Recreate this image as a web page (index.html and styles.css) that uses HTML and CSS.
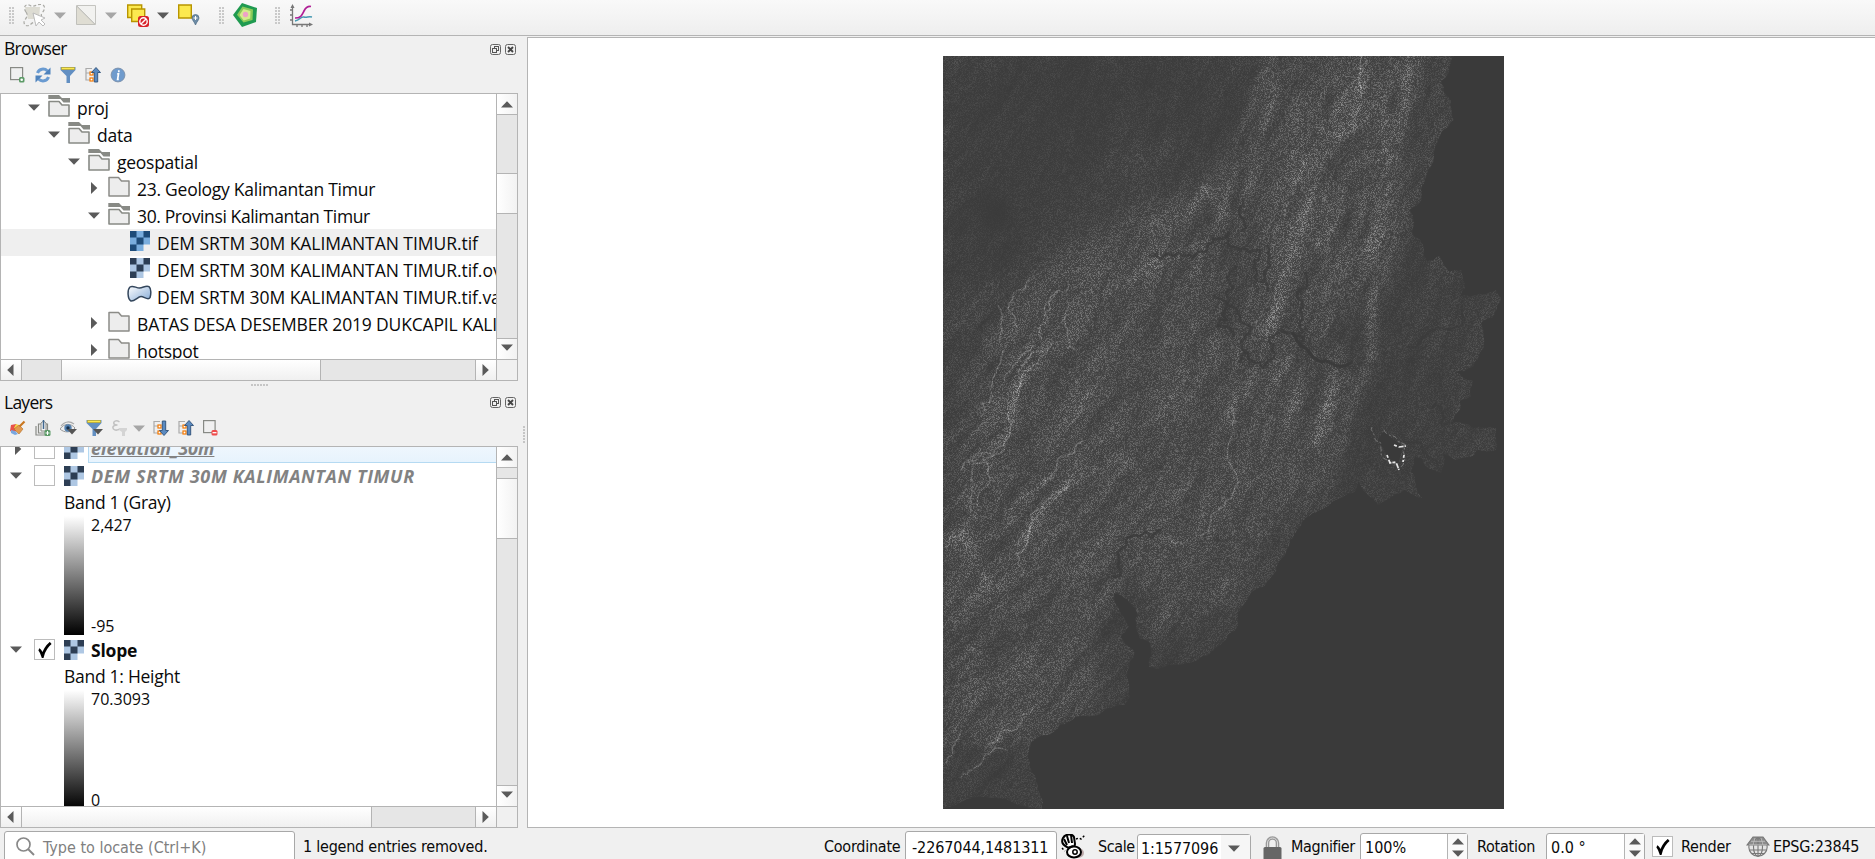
FILE: index.html
```
<!DOCTYPE html>
<html lang="en">
<head>
<meta charset="utf-8">
<title>Map</title>
<link rel="stylesheet" href="styles.css">
</head>
<body>
<svg class="defs" width="0" height="0">
  <defs>
    <linearGradient id="poly" x1="0" y1="0" x2="1" y2="1"><stop offset="0" stop-color="#fff"/><stop offset="1" stop-color="#86abd6"/></linearGradient>
    <symbol id="down" viewBox="0 0 12 7"><path d="M0 .5h12L6 6.8z" fill="currentColor"/></symbol>
    <symbol id="up" viewBox="0 0 12 7"><path d="M0 6.5h12L6 .2z" fill="currentColor"/></symbol>
    <symbol id="right" viewBox="0 0 7 12"><path d="M.5 0v12L6.8 6z" fill="currentColor"/></symbol>
    <symbol id="left" viewBox="0 0 7 12"><path d="M6.5 0v12L.2 6z" fill="currentColor"/></symbol>
    <symbol id="folder" viewBox="0 0 22 22"><path d="M1 1.500h9.500l3 3.500H21v15H1z" fill="#ededed" stroke="#8c8c88" stroke-width="1.500" stroke-linejoin="round"/></symbol>
    <symbol id="folder-open" viewBox="0 0 22 22"><path d="M.3 0H11l3 3h8v4.500h-6.500L12.500 4H.3z" fill="#888a85"/><path d="M1 6.500h10l3 3.500h7v11H1z" fill="#ededed" stroke="#888a85" stroke-width="1.600" stroke-linejoin="round"/></symbol>
    <symbol id="raster" viewBox="0 0 20 20"><path d="M0 0h20v13.500h-6.500V20H0z" fill="#aec7e3"/><path d="M0 0h6.500v6.500H0zM13.500 0H20v6.500h-6.500zM6.500 6.500h7v7h-7zM0 13.500h6.500V20H0z" fill="#2d3e54"/></symbol>
    <symbol id="raster-sel" viewBox="0 0 20 20"><path d="M0 0h20v13.500h-6.500V20H0z" fill="#79addd"/><path d="M0 0h6.500v6.500H0zM13.500 0H20v6.500h-6.500zM6.500 6.500h7v7h-7zM0 13.500h6.500V20H0z" fill="#1d4b78"/></symbol>
    <symbol id="polygon" viewBox="0 0 25 19"><path d="M3 2c3-2 6 1 9.500 1S19-.2 22 1.700c2.500 2 2 8 1 11-2 3-6-1.200-9-1.200s-6 4.700-10 4.500C.3 14 .3 4.500 3 2z" fill="url(#poly)" stroke="#33465c" stroke-width="1.500"/></symbol>
    <symbol id="float" viewBox="0 0 11 11"><rect x=".5" y=".5" width="10" height="10" rx="2" fill="none" stroke="#666"/><rect x="4.500" y="2.500" width="4" height="4" fill="none" stroke="#555"/><rect x="2.500" y="4.500" width="4" height="4" fill="#f0f0f0" stroke="#555"/></symbol>
    <symbol id="close" viewBox="0 0 11 11"><rect x=".5" y=".5" width="10" height="10" rx="2" fill="none" stroke="#666"/><path d="M3 3l5 5M8 3L3 8" stroke="#444" stroke-width="1.900"/></symbol>
    <symbol id="filter" viewBox="0 0 16 16"><path d="M.5 0h15v3L10 9v7H6.500V9L.5 3z" fill="#628fc2"/><path d="M1.500.5h13v2h-13z" fill="#fce94f" stroke="#c4a000" stroke-width=".5"/></symbol>
    <symbol id="tree-lines" viewBox="0 0 16 16"><path d="M1 1v12h4M1 6h4M1 1.500h6" fill="none" stroke="#aaa" stroke-width="1.200"/><rect x="5" y="5" width="3" height="3" fill="#fff" stroke="#f57900" stroke-width="1.200"/><rect x="5" y="11" width="3" height="3" fill="#fff" stroke="#f57900" stroke-width="1.200"/></symbol>
    <symbol id="collapse" viewBox="0 0 16 16"><use href="#tree-lines"/><path d="M11 .5l4.500 5H12.700V15H9.300V5.500H6.500z" fill="#5b8ac0" stroke="#2f5078" stroke-width=".9"/></symbol>
    <symbol id="expand" viewBox="0 0 16 16"><use href="#tree-lines"/><path d="M11 15.500l4.500-5H12.700V1H9.300v9.500H6.500z" fill="#5b8ac0" stroke="#2f5078" stroke-width=".9"/></symbol>
    <symbol id="check" viewBox="0 0 14 16"><path d="M.8 7.500C2.500 8 3.500 11 4.600 14 6 9 9 4 12.700 1" fill="none" stroke="#000" stroke-width="2.800"/></symbol>
  </defs>
</svg>

<header class="toolbar">
  <i class="grip"></i>
  <svg class="t-select" width="24" height="24"><path d="M2 3l3 12H16l1-12z" fill="#dddcd3"/><path d="M3 8C-1 2 4-1 8 2c4 1 7-3 12-1 3 2 1 6-1 8-2 3 1 4 0 6M3 8c3 4-1 7-2 10 0 4 4 5 7 2 2-2 4-2 6-1" fill="none" stroke="#a9a9a4" stroke-width="1.200" stroke-dasharray="3 2"/><path d="M10 9l3 13 3-4 4 4 2-2-4-4 4-2z" fill="#fff" stroke="#bbb"/></svg>
  <svg class="t-arrow dim" width="12" height="7"><use href="#down"/></svg>
  <svg class="t-split" width="20" height="20"><path d="M.5.5h19v19z" fill="#f2f2f0" stroke="#c4c4c0"/><path d="M.5 1v18.500H19z" fill="#dfddd3" stroke="#c0c0bb"/></svg>
  <svg class="t-arrow dim" width="12" height="7"><use href="#down"/></svg>
  <svg class="t-desel" width="23" height="23"><path d="M.7 1h14v12.500h-14z" fill="#fce94f" stroke="#b89500" stroke-width="1.400"/><path d="M4.700 5h13v12.500h-13z" fill="#fce94f" stroke="#b89500" stroke-width="1.400"/><rect x="11" y="12" width="11" height="11" rx="2.500" fill="#d8222a"/><circle cx="16.500" cy="17.500" r="3.700" fill="none" stroke="#fff" stroke-width="1.400"/><path d="M14 20l5-5" stroke="#fff" stroke-width="1.400"/></svg>
  <svg class="t-arrow" width="12" height="7"><use href="#down"/></svg>
  <svg class="t-loc" width="22" height="22"><path d="M.7 1h12.600v13H.7z" fill="#fce94f" stroke="#b89500" stroke-width="1.400"/><path d="M17.500 10.500a3.500 3.500 0 0 1 3.500 3.500c0 2-2.500 4-3.500 7-1-3-3.500-5-3.500-7a3.500 3.500 0 0 1 3.500-3.500z" fill="#6d8ca6" stroke="#4c6a84" stroke-width=".7"/><path d="M17.500 12v4M15.500 14h4" stroke="#fff"/></svg>
  <i class="grip g2"></i>
  <svg class="t-penta" width="24" height="24"><path d="M9 0l15 5-1 14-14 5-9-12z" fill="#1f9a50"/><path d="M9.500 3.500L20 6.500l-.5 10.500L10.500 19.500 4 11.800z" fill="#8ccb5a"/><path d="M10.500 6l7 2-.3 7.500-6.500 2L6.500 12z" fill="#d5ec8d"/><circle cx="12.500" cy="11.500" r="2.700" fill="#eda2c6"/></svg>
  <i class="grip g3"></i>
  <svg class="t-chart" width="23" height="23"><path d="M2.500 2v18.500H20M0 6h2M0 11h2M0 16h2M7 21v2M12 21v2M17 21v2" fill="none" stroke="#777" stroke-width="1.300"/><path d="M.5 4l2-4 2 4zM19 18.500l4 2-4 2z" fill="#777"/><path d="M5 17c5-1 6-5 9-4s4-1 8 0" fill="none" stroke="#4699b2" stroke-width="1.500"/><path d="M5 14c6 0 7-3 9-7s4-5 7-4.500" fill="none" stroke="#b01e96" stroke-width="1.700"/></svg>
</header>

<main class="work">
  <aside class="docks">
    <section class="dock browser">
      <div class="title"><span>Browser</span><svg width="11" height="11"><use href="#float"/></svg><svg width="11" height="11"><use href="#close"/></svg></div>
      <div class="tools">
        <svg width="16" height="16"><rect x=".6" y=".6" width="12" height="12" fill="none" stroke="#888a85" stroke-width="1.200"/><rect x="9" y="10" width="5.500" height="5.500" rx="1.500" fill="#5b9a66"/><circle cx="11.700" cy="12.700" r="1.300" fill="#fff"/></svg>
        <svg width="16" height="16"><path d="M2.500 6C4 1.500 9.500 1 12.500 4M13.500 10C12 14.500 6.500 15 3.500 12" fill="none" stroke="#6a9bd1" stroke-width="3"/><path d="M15.500.5v7H8.500zM.5 15.500v-7h7z" fill="#4f83bd"/></svg>
        <svg width="16" height="16"><use href="#filter"/></svg>
        <svg width="16" height="16"><use href="#collapse"/></svg>
        <svg width="16" height="16"><circle cx="8" cy="8" r="6.900" fill="#6f9bcd" stroke="#7e93ad"/><path d="M8.800 3.200v2M7.200 6.800h1.300l-.9 5.500h1.200" fill="none" stroke="#fff" stroke-width="1.700"/></svg>
      </div>
      <div class="frame">
        <div class="view tree">
          <div class="row l0"><svg class="ex" width="12" height="7"><use href="#down"/></svg><svg class="ic" width="22" height="22"><use href="#folder-open"/></svg>proj</div>
          <div class="row l1"><svg class="ex" width="12" height="7"><use href="#down"/></svg><svg class="ic" width="22" height="22"><use href="#folder-open"/></svg>data</div>
          <div class="row l2"><svg class="ex" width="12" height="7"><use href="#down"/></svg><svg class="ic" width="22" height="22"><use href="#folder-open"/></svg>geospatial</div>
          <div class="row l3"><svg class="ex" width="12" height="12"><use href="#right"/></svg><svg class="ic" width="22" height="22"><use href="#folder"/></svg>23. Geology Kalimantan Timur</div>
          <div class="row l3 tight"><svg class="ex" width="12" height="7"><use href="#down"/></svg><svg class="ic" width="22" height="22"><use href="#folder-open"/></svg>30. Provinsi Kalimantan Timur</div>
          <div class="row l4 caps hover"><svg class="ic" width="20" height="20"><use href="#raster-sel"/></svg>DEM SRTM 30M KALIMANTAN TIMUR.tif</div>
          <div class="row l4 caps"><svg class="ic" width="20" height="20"><use href="#raster"/></svg>DEM SRTM 30M KALIMANTAN TIMUR.tif.ovr</div>
          <div class="row l4 caps vec"><svg class="ic" width="25" height="19"><use href="#polygon"/></svg>DEM SRTM 30M KALIMANTAN TIMUR.tif.vat</div>
          <div class="row l3 caps2"><svg class="ex" width="12" height="12"><use href="#right"/></svg><svg class="ic" width="22" height="22"><use href="#folder"/></svg>BATAS DESA DESEMBER 2019 DUKCAPIL KALIMANTAN</div>
          <div class="row l3"><svg class="ex" width="12" height="12"><use href="#right"/></svg><svg class="ic" width="22" height="22"><use href="#folder"/></svg>hotspot</div>
        </div>
        <div class="vbar"><b><svg width="12" height="7"><use href="#up"/></svg></b><i class="v1"></i><b class="thumb v2"></b><i class="rest"></i><b><svg width="12" height="7"><use href="#down"/></svg></b></div>
        <div class="hbar"><b><svg width="7" height="12"><use href="#left"/></svg></b><i class="h1"></i><b class="thumb h2"></b><i class="rest"></i><b><svg width="7" height="12"><use href="#right"/></svg></b></div>
        <div class="corner"></div>
      </div>
    </section>
    <div class="hsplit"><i></i></div>
    <section class="dock layers">
      <div class="title"><span>Layers</span><svg width="11" height="11"><use href="#float"/></svg><svg width="11" height="11"><use href="#close"/></svg></div>
      <div class="tools">
        <svg width="16" height="16"><path d="M1 5l5-1 3 4-5 5-4-2z" fill="#e8524a"/><path d="M6 4l3 1-2 4-3-1z" fill="#f7d74a"/><path d="M1 10l4 1 3 3-3 1-4-2z" fill="#79a7e0"/><path d="M4 9l5-4 4 4-4 5z" fill="#e29a4e" stroke="#b06f2a" stroke-width=".6"/><path d="M9.500 6.500L14.500 1.500" stroke="#c9771f" stroke-width="2.200"/></svg>
        <svg width="16" height="16"><path d="M1 6v9h9M3.500 4v9h9V4z" fill="none" stroke="#888a85" stroke-width="1.200"/><path d="M6 3v8h5V3L8.500 1z" fill="#f4f4f4" stroke="#888a85"/><path d="M8.500 0v9" stroke="#3f668f" stroke-width="1.500"/><rect x="9.500" y="10" width="6" height="6" rx="1.500" fill="#5b9a66"/><path d="M12.500 11v4M10.500 13h4" stroke="#fff"/></svg>
        <svg width="17" height="16"><path d="M0 9C4 3 11 3 15 8 11 13 4 13 0 9z" fill="#eee" stroke="#999"/><path d="M1 6C5 1 10 1 14 4" fill="none" stroke="#aaa" stroke-width="1.200"/><circle cx="8" cy="8" r="3.700" fill="#5480ae"/><circle cx="8" cy="8" r="1.700" fill="#17304c"/><path d="M7 9h10l-5 5.500z" fill="#555"/></svg>
        <svg width="17" height="16"><use href="#filter" width="16" height="16"/><path d="M7 9h10l-5 5.500z" fill="#555"/></svg>
        <svg width="16" height="16"><path d="M7.500 2C4-.5 1 1.500 2 4c.6 1 2 1 3.500 1C3 5-.5 6 1.500 9c2 2 5 1 6.500-.5" fill="none" stroke="#c2c2c2" stroke-width="1.500"/><path d="M7 8h8v2l-2 2v4h-3v-4L7 10z" fill="#d4d4d4"/></svg>
        <svg class="dim tiny" width="12" height="7"><use href="#down"/></svg>
        <svg width="16" height="16"><use href="#expand"/></svg>
        <svg width="16" height="16"><use href="#collapse"/></svg>
        <svg width="16" height="16"><rect x=".6" y=".6" width="11.500" height="12" fill="none" stroke="#888a85" stroke-width="1.200"/><rect x="8.500" y="10" width="6" height="5.500" rx="1.500" fill="#ef4b4b"/><path d="M9.500 12.700h4" stroke="#fff" stroke-width="1.300"/></svg>
      </div>
      <div class="frame">
        <div class="view legend">
          <div class="lrow first"><svg class="ex" width="12" height="12"><use href="#right"/></svg><i class="box"></i><svg class="ic" width="20" height="20"><use href="#raster"/></svg><span class="cur">elevation_30m</span></div>
          <div class="lrow"><svg class="ex" width="12" height="7"><use href="#down"/></svg><i class="box"></i><svg class="ic" width="20" height="20"><use href="#raster"/></svg><span class="off">DEM SRTM 30M KALIMANTAN TIMUR</span></div>
          <div class="band">Band 1 (Gray)</div>
          <div class="ramp"><i></i><div><span>2,427</span><span>-95</span></div></div>
          <div class="lrow"><svg class="ex" width="12" height="7"><use href="#down"/></svg><i class="box"><svg width="14" height="16"><use href="#check"/></svg></i><svg class="ic" width="20" height="20"><use href="#raster"/></svg><span class="on">Slope</span></div>
          <div class="band">Band 1: Height</div>
          <div class="ramp"><i></i><div><span>70.3093</span><span>0</span></div></div>
        </div>
        <div class="vbar"><b><svg width="12" height="7"><use href="#up"/></svg></b><i class="v3"></i><b class="thumb v4"></b><i class="rest"></i><b><svg width="12" height="7"><use href="#down"/></svg></b></div>
        <div class="hbar"><b><svg width="7" height="12"><use href="#left"/></svg></b><b class="thumb h4"></b><i class="rest"></i><b><svg width="7" height="12"><use href="#right"/></svg></b></div>
        <div class="corner"></div>
      </div>
    </section>
  </aside>
  <div class="vsplit"><i></i></div>
  <section class="mapview"><canvas id="map" width="561" height="753"></canvas></section>
</main>

<footer class="status">
  <div class="field search"><svg width="19" height="19"><circle cx="7.500" cy="7.500" r="6.500" fill="none" stroke="#888" stroke-width="1.700"/><path d="M12 12l6 6" stroke="#888" stroke-width="2"/></svg><span>Type to locate (Ctrl+K)</span></div>
  <span class="msg">1 legend entries removed.</span>
  <span class="lab coord">Coordinate</span>
  <div class="field xy">-2267044,1481311</div>
  <svg class="s-mouse" width="24" height="25"><ellipse cx="17" cy="19" rx="6" ry="5" fill="#bca9a9"/><path d="M2 4C4 0 11-1 13 3l1 7c0 3-5 5-8 3C2 11 0 8 2 4z" fill="#fff" stroke="#000" stroke-width="2"/><path d="M6 2l2 7M10 1l1 8M3 5l3 6" stroke="#000" stroke-width="2"/><ellipse cx="13" cy="18" rx="7" ry="5.500" fill="#fff" stroke="#000" stroke-width="2"/><circle cx="14" cy="18" r="2.200" fill="none" stroke="#000" stroke-width="1.500"/><path d="M7 14l5-2" stroke="#000" stroke-width="2"/><path d="M15 5l3-1 2 1 4-4M1 14l3 3" stroke="#000" stroke-width="1.500" stroke-dasharray="2 2" fill="none"/></svg>
  <span class="lab scale">Scale</span>
  <div class="field combo"><span>1:1577096</span><b><svg width="12" height="7"><use href="#down"/></svg></b></div>
  <svg class="s-lock" width="19" height="24"><path d="M4.500 12V7a5 5 0 0 1 10 0v5" fill="none" stroke="#999" stroke-width="3.600"/><path d="M4.500 12V7a5 5 0 0 1 10 0v5" fill="none" stroke="#ddd" stroke-width="1"/><rect x=".5" y="11" width="18" height="13" rx="1.500" fill="#666"/></svg>
  <span class="lab mag">Magnifier</span>
  <div class="field spin m"><span>100%</span><b><svg width="12" height="7"><use href="#up"/></svg><svg width="12" height="7"><use href="#down"/></svg></b></div>
  <span class="lab rot">Rotation</span>
  <div class="field spin r"><span>0.0 °</span><b><svg width="12" height="7"><use href="#up"/></svg><svg width="12" height="7"><use href="#down"/></svg></b></div>
  <i class="box"><svg width="14" height="16"><use href="#check"/></svg></i>
  <span class="lab ren">Render</span>
  <svg class="s-globe" width="24" height="21"><g fill="none" stroke="#777" stroke-width="1.100"><circle cx="12" cy="11" r="9.200" fill="#e4e4e4"/><path d="M7 1h10l6 8H1z" fill="#8c8c8c"/><ellipse cx="12" cy="11" rx="4.500" ry="9.200"/><path d="M12 1.500v19M3.500 14h17M5.500 17.500h13"/></g><path d="M3 8.800h18M5 5.300h14M9 2L7 9M15 2l2 7" stroke="#c4c4c4" stroke-width=".8"/></svg>
  <span class="lab">EPSG:23845</span>
</footer>
<script src="map.js"></script>
</body>
</html>
```
FILE: styles.css
```
* { box-sizing: border-box; }
body { margin: 0; height: 859px; overflow: hidden; display: flex; flex-direction: column; background: #f0f0f0; font: 17.5px "Open Sans", "Noto Sans", sans-serif; color: #0a0a0a; }
svg { display: block; flex: none; color: #5a5a5a; }
i { font-style: normal; display: block; }
b { font-weight: 400; }
.defs { position: absolute; }
.dim { color: #a6a6a6; }

.toolbar { height: 36px; flex: none; display: flex; align-items: flex-start; padding: 0 0 0 9px; background: linear-gradient(#f9f9f9, #eeeeee); border-bottom: 1px solid #b4b4b4; }
.grip { width: 5px; height: 17px; margin-top: 7px; background: radial-gradient(circle at 1px 1px, #c9c9c9 0.8px, transparent 1px) 0 0 / 3px 3px; }
.g2 { margin-left: 19px; }
.g3 { margin-left: 18px; }
.t-select { margin: 4px 0 0 9px; }
.t-arrow { margin: 12px 0 0 7px; }
.t-split { margin: 5px 0 0 10px; }
.t-split + .t-arrow { margin-left: 9px; }
.t-desel { margin: 4px 0 0 10px; }
.t-loc { margin: 4px 0 0 9px; }
.t-penta { margin: 3px 0 0 9px; }
.t-chart { margin: 4px 0 0 10px; }

.work { display: flex; height: 792px; flex: none; }
.docks { width: 518px; display: flex; flex-direction: column; }
.title { height: 27px; display: flex; align-items: center; padding: 0 2px 3px 4px; gap: 4px; letter-spacing: -0.75px; }
.title svg { margin-top: 2px; }
.title span { flex: 1; }
.tools { height: 25px; display: flex; align-items: center; padding-left: 10px; gap: 9px; }
.tiny { margin: 0 -1px 0 -4px; }
.browser .tools { height: 30px; padding-bottom: 7px; }
.layers .tools { height: 29px; padding-bottom: 7px; }
.frame { display: grid; grid-template-columns: 495px 21px; border: 1px solid #b4b4b4; }
.browser .frame { grid-template-rows: 265px 21px; }
.layers .frame { grid-template-rows: 359px 21px; }
.view { background: #fff; overflow: hidden; }

.row { display: flex; align-items: center; height: 27px; white-space: nowrap; letter-spacing: -0.26px; padding-top: 1px; }
.row .ex { width: 12px; margin-right: 8px; position: relative; top: -1px; }
.row .ic { margin-right: 7px; position: relative; top: -2px; }
.l0 { padding-left: 27px; }
.l1 { padding-left: 47px; }
.l2 { padding-left: 67px; }
.l3 { padding-left: 87px; }
.l4 { padding-left: 129px; }
.row.vec { padding-left: 126px; }
.row.vec .ic { margin-right: 5px; top: -3px; }
.caps { letter-spacing: -0.05px; }
.caps2 { letter-spacing: -0.17px; }
.tight { letter-spacing: -0.38px; }
.hover { background: #efefef; }

.vbar, .hbar { display: flex; background: #e6e6e6; }
.vbar { flex-direction: column; border-left: 1px solid #b4b4b4; }
.hbar { border-top: 1px solid #b4b4b4; }
.rest { flex: 1; }
.vbar b, .hbar b { flex: none; display: flex; align-items: center; justify-content: center; background: linear-gradient(90deg, #fff, #f2f2f2); }
.hbar b { background: linear-gradient(#fff, #f0f0f0); width: 21px; }
.vbar b { height: 21px; }
.vbar b:first-child { border-bottom: 1px solid #b4b4b4; }
.vbar b:last-child { border-top: 1px solid #b4b4b4; padding-bottom: 3px; }
.hbar b:first-child { border-right: 1px solid #b4b4b4; padding-right: 1px; }
.hbar b:last-child { border-left: 1px solid #b4b4b4; padding-right: 2px; }
.vbar .thumb { border: solid #b4b4b4; border-width: 1px 0; }
.hbar .thumb { border: solid #b4b4b4; border-width: 0 1px; }
.corner { border: solid #b4b4b4; border-width: 1px 0 0 1px; }
.v1 { height: 58px; }
.vbar .v2 { height: 41px; }
.v3 { height: 10px; }
.vbar .v4 { height: 61px; }
.h1 { width: 39px; }
.hbar .h2 { width: 260px; }
.hbar .h4 { width: 350px; border-left: 0; }

.hsplit { height: 8px; display: flex; justify-content: center; align-items: center; }
.hsplit i { width: 17px; height: 2px; background: radial-gradient(circle at 1px 1px, #c4c4c4 0.7px, transparent 1px) 0 0 / 3px 3px; }
.layers .title { height: 28px; }
.vsplit { width: 9px; }
.vsplit i { width: 2px; height: 17px; margin: 390px 0 0 5px; background: radial-gradient(circle at 1px 1px, #c4c4c4 0.7px, transparent 1px) 0 0 / 3px 3px; }

.lrow { display: flex; align-items: center; height: 27px; padding-left: 9px; white-space: nowrap; }
.first { margin-top: -12px; }
.lrow .ex { margin-right: 12px; }
.first .ex { margin: 0 10px 0 2px; }
.box { width: 21px; height: 21px; flex: none; border: 1px solid #bcbcbc; background: #fff; display: flex; align-items: center; justify-content: center; }
.lrow .ic { margin: 0 4px 0 9px; }
.cur, .off, .on { padding-left: 3px; font-weight: 700; line-height: 26px; }
.cur, .off { color: #828282; font-style: italic; font-size: 18px; letter-spacing: 0.64px; }
.cur { flex: 1; letter-spacing: 0.05px; text-decoration: underline; background: linear-gradient(#f4f9fe, #e7f3fd); border: 1px solid #b5daf2; border-right: 0; padding-left: 2px; margin-bottom: 1px; line-height: 27px; }
.on { letter-spacing: -0.2px; }
.band { height: 27px; line-height: 26px; padding-left: 63px; letter-spacing: -0.28px; }
.ramp { height: 119px; margin-bottom: 1px; padding-left: 63px; display: flex; gap: 7px; font-size: 16px; line-height: 18px; }
.ramp i { width: 20px; background: linear-gradient(#fff, #000); }
.ramp div { display: flex; flex-direction: column; justify-content: space-between; }

.mapview { flex: 1; margin-top: 1px; background: #fff; border: 1px solid #b4b4b4; border-right: 0; padding: 18px 0 0 415px; }
.mapview canvas { display: block; background: #3a3a3a; }

.status { flex: 1; display: flex; align-items: flex-start; padding: 3px 0 0 4px; font: 16px/31px "DejaVu Sans Condensed", "DejaVu Sans", sans-serif; white-space: nowrap; overflow: hidden; }
.field { flex: none; background: #fff; border: 1px solid #a8a8a8; border-radius: 3px; height: 33px; display: flex; align-items: center; }
.search { width: 291px; padding-left: 11px; color: #808080; gap: 8px; }
.search svg { position: relative; top: -1px; }
.msg { width: 521px; margin-left: 8px; letter-spacing: -0.23px; }
.lab { letter-spacing: -0.25px; flex: none; }
.coord { width: 81px; }
.xy { width: 152px; padding-left: 6px; letter-spacing: -0.1px; }
.s-mouse { margin: 3px 0 0 4px; }
.scale { margin-left: 13px; width: 39px; letter-spacing: -0.4px; }
.combo { width: 114px; margin-top: 3px; padding-left: 3px; height: 28px; letter-spacing: -0.1px; }
.combo b { flex: 1; align-self: stretch; margin-left: 3px; background: #f6f6f6; display: flex; align-items: center; justify-content: center; padding-right: 3px; }
.s-lock { margin: 5px 0 0 12px; }
.mag { margin-left: 9px; width: 69px; letter-spacing: -0.4px; }
.spin { margin-top: 2px; height: 29px; padding-left: 4px; }
.spin span { flex: 1; }
.spin b { width: 20px; align-self: stretch; border-left: 1px solid #b4b4b4; background: #fafafa; display: flex; flex-direction: column; justify-content: center; align-items: center; gap: 5px; }
.m { width: 108px; }
.rot { margin-left: 9px; width: 69px; }
.r { width: 99px; }
.status .box { margin: 5px 0 0 7px; }
.ren { margin-left: 8px; width: 65px; }
.s-globe { margin: 5px 3px 0 0; }
```
FILE: map.js
```
// Slope raster: a relief mask (land, ridges, rivers) modulated by oriented speckle.
const W = 561, H = 753;
const canvas = document.getElementById('map');
const ctx = canvas.getContext('2d');

let seed = 7;
const rnd = () => ((seed = (seed * 1664525 + 1013904223) >>> 0) / 4294967296);

// Fractal midpoint displacement gives coastlines and rivers a natural outline.
function rough(pts, amount, closed) {
  let out = closed ? [...pts, pts[0]] : pts;
  for (let pass = 0; pass < 3; pass++) {
    const next = [out[0]];
    for (let i = 1; i < out.length; i++) {
      const a = out[i - 1], b = out[i];
      const len = Math.hypot(b[0] - a[0], b[1] - a[1]);
      if (len > 4 && !(a[0] === 0 && b[0] === 0) && !(a[1] === 0 && b[1] === 0)) {
        const d = (rnd() - 0.5) * len * amount;
        next.push([(a[0] + b[0]) / 2 - (b[1] - a[1]) / len * d, (a[1] + b[1]) / 2 + (b[0] - a[0]) / len * d]);
      }
      next.push(b);
    }
    out = next;
  }
  return out;
}

const land = rough([[0,0],[511,0],[498,27],[508,45],[511,64],[492,91],[484,117],[478,145],[467,154],[470,178],[481,191],[484,205],[496,200],[505,215],[519,214],[522,232],[517,240],[535,238],[553,234],[558,244],[549,262],[538,267],[541,291],[530,311],[512,316],[530,325],[528,340],[517,345],[517,354],[509,367],[530,372],[553,372],[553,394],[535,394],[527,401],[512,404],[500,398],[498,417],[485,412],[472,400],[468,415],[479,442],[461,434],[450,440],[435,449],[423,437],[415,425],[410,437],[400,441],[385,450],[370,457],[358,470],[347,484],[335,508],[320,531],[297,554],[293,574],[275,590],[255,604],[232,609],[206,611],[208,600],[207,587],[197,583],[194,557],[184,543],[171,537],[178,557],[186,571],[178,581],[192,597],[185,614],[187,641],[182,649],[150,660],[117,669],[88,687],[87,711],[95,730],[99,753],[0,753]], 0.25, true);

function layer(draw) {
  const c = document.createElement('canvas');
  c.width = W; c.height = H;
  const g = c.getContext('2d', { willReadFrequently: true });
  g.lineCap = g.lineJoin = 'round';
  draw(g);
  return g.getImageData(0, 0, W, H).data;
}
function trace(g, pts) {
  g.beginPath();
  pts.forEach((p, i) => (i ? g.lineTo(p[0], p[1]) : g.moveTo(p[0], p[1])));
}
function area(g, pts, v, blur) {
  g.filter = `blur(${blur}px)`;
  g.fillStyle = `rgb(${v},${v},${v})`;
  trace(g, pts); g.closePath(); g.fill();
}
function line(g, pts, color, w, blur) {
  g.filter = blur ? `blur(${blur}px)` : 'none';
  g.strokeStyle = color; g.lineWidth = w;
  trace(g, pts); g.stroke();
}

const ridges = [
  [[419,0],[417,41],[404,77]], [[450,11],[438,44],[425,60],[404,77],[390,80]], [[442,50],[442,85]],
  [[400,40],[389,64]], [[370,70],[395,78],[410,70]], [[335,20],[320,70]], [[470,0],[455,80]],
  [[412,92],[402,118],[392,157],[377,190]], [[370,137],[354,177],[340,220],[333,260]],
  [[264,135],[250,150],[232,170]], [[264,135],[284,164]], [[255,190],[200,214],[171,237]],
  [[171,274],[148,307]], [[438,174],[420,215],[400,244],[377,284]], [[430,225],[428,300]],
  [[404,320],[385,345],[370,385]], [[350,300],[330,325]], [[316,317],[289,351],[291,374]],
  [[245,320],[215,365]], [[109,287],[86,301],[74,335],[67,376],[44,397],[18,414],[29,454]],
  [[129,424],[100,450],[79,490]], [[160,400],[190,410]], [[21,474],[2,491]], [[150,330],[120,380]],
  [[355,320],[345,370]], [[20,480],[45,530]], [[110,420],[60,455]], [[180,395],[130,425]],
  [[335,245],[322,285]], [[410,110],[440,95],[455,105]], [[365,100],[350,130]]
];
const crests = [
  [[109,287],[88,298],[76,322],[72,345]], [[105,293],[80,315],[70,340],[67,376]], [[67,376],[55,392],[35,402],[18,414]],
  [[64,380],[50,400],[30,408]], [[30,412],[29,435],[34,464]], [[129,424],[104,444],[84,480],[81,517]], [[2,491],[8,480],[21,474]],
  [[289,351],[291,374],[291,434],[275,455],[258,480]], [[86,222],[70,240],[66,257],[69,284]],
  [[125,225],[108,240],[100,266]], [[125,245],[122,270],[125,292],[134,294]], [[55,250],[58,290]],
  [[44,691],[71,674],[78,660],[90,652]], [[3,707],[10,690],[18,674]], [[18,721],[40,705],[64,694]],
  [[60,295],[50,340],[38,360]], [[225,480],[240,488]], [[419,0],[417,41]], [[115,235],[105,262],[98,285]],
  [[92,290],[78,300],[62,325]], [[40,400],[44,430],[34,450]], [[100,430],[118,400],[140,385]]
];
const rivers = [
  [[207,199],[230,200],[255,196],[270,182],[286,177],[297,194],[316,194],[314,216],[312,231]],
  [[293,211],[284,222],[284,240],[297,261],[302,280],[305,297],[296,306]],
  [[305,297],[320,312],[326,281],[347,277],[358,290]],
  [[362,217],[360,250],[354,284]], [[465,291],[490,275],[519,251]],
  [[484,350],[500,370],[509,367]], [[458,377],[480,396],[500,414]], [[171,521],[182,491],[200,478],[217,474]],
  [[300,145],[299,175]], [[325,190],[322,215],[325,235]], [[270,240],[275,270],[290,280]]
];
const trunk = [[350,277],[358,290],[370,301],[390,308],[408,307]];
const faint = [
  [[408,307],[435,307],[465,301]], [[408,307],[417,320],[421,350],[431,374]],
  [[355,303],[342,350],[330,372]], [[375,320],[360,355],[352,374]], [[270,310],[240,340],[220,370]],
  [[345,393],[390,403],[400,430]], [[430,181],[455,180]], [[390,115],[440,124],[455,120]],
  [[260,480],[290,482],[320,485],[347,484]], [[240,550],[265,575]], [[270,350],[230,395],[200,440]],
  [[180,390],[140,415],[110,450]], [[285,440],[295,470],[300,500]], [[160,250],[158,230],[172,215]]
];

const mask = layer(g => {
  g.fillStyle = '#000'; g.fillRect(0, 0, W, H);
  area(g, land, 55, 0.6);
  // interior uplands
  area(g, [[310,0],[490,0],[480,110],[455,170],[440,300],[400,400],[385,430],[345,470],[300,540],[215,595],[185,500],[150,600],[170,640],[60,690],[0,720],[0,400],[50,270],[105,195],[180,170],[260,130],[300,110]], 112, 12);
  area(g, [[0,0],[280,0],[300,60],[240,120],[120,150],[100,190],[0,230]], 32, 16);
  area(g, [[160,105],[190,90],[225,80],[250,82],[235,104],[190,125]], 62, 7);
  area(g, [[0,695],[80,690],[92,753],[0,753]], 42, 5);
  area(g, [[470,0],[500,0],[500,140],[455,160]], 68, 8);
  area(g, [[375,280],[480,200],[555,240],[555,380],[450,450],[400,440],[410,370],[430,310]], 44, 9);
  area(g, [[35,140],[65,140],[70,170],[40,175]], 8, 6);
  // marshy lowlands around the lakes
  area(g, [[285,180],[325,185],[330,240],[295,300],[275,260]], 88, 9);
  ridges.forEach(r => line(g, r, 'rgba(215,215,215,.6)', 8, 3));
  rivers.forEach(r => line(g, rough(r, 0.7), 'rgba(10,10,10,.85)', 2.6, 0.7));
  line(g, rough(trunk, 0.3), 'rgba(0,0,0,.95)', 3.2, 0.6);
  faint.forEach(r => line(g, rough(r, 0.6), 'rgba(30,30,30,.5)', 2.4, 1));
});
const coast = layer(g => { g.fillStyle = '#fff'; trace(g, land); g.closePath(); g.fill(); });
const bright = layer(g => {
  g.fillStyle = '#000'; g.fillRect(0, 0, W, H);
  crests.forEach(r => line(g, rough(r, 0.5), 'rgba(210,210,210,.6)', 1.5, 0.5));
});

// Value noise sampled in a frame aligned with the fold belt.
const grid = Array.from({ length: 65536 }, rnd);
function vnoise(x, y) {
  const xi = Math.floor(x), yi = Math.floor(y);
  let fx = x - xi, fy = y - yi;
  fx = fx * fx * (3 - 2 * fx); fy = fy * fy * (3 - 2 * fy);
  const at = (a, b) => grid[((b & 255) << 8) | (a & 255)];
  return (at(xi, yi) * (1 - fx) + at(xi + 1, yi) * fx) * (1 - fy) +
         (at(xi, yi + 1) * (1 - fx) + at(xi + 1, yi + 1) * fx) * fy;
}

const img = ctx.createImageData(W, H);
for (let y = 0; y < H; y++) {
  for (let x = 0; x < W; x++) {
    const k = (y * W + x) * 4;
    const inside = coast[k + 3] / 255;
    // The belt swings from NNE in the north-east to NE in the south-west.
    const blend = Math.min(1, Math.max(0, (x - y * 0.5 + 60) / 220));
    const wx = x + 10 * vnoise(x / 40 + 9, y / 40 + 60), wy = y + 10 * vnoise(x / 40 + 33, y / 40 + 5);
    const along = (a, su, sv, o) => {
      const ca = Math.cos(a), sa = Math.sin(a);
      return vnoise((wx * ca - wy * sa) / su + o, (wx * sa + wy * ca) / sv + o + 60);
    };
    const mix = (su, sv, o) => along(1.17, su, sv, o) * blend + along(0.88, su, sv, o) * (1 - blend);
    const broad = mix(60, 11, 90);
    const mid = mix(26, 5, 30);
    const fine = mix(7, 2, 20);
    const m = mask[k] / 255 * (0.1 + 0.75 * broad + 0.65 * mid + 0.5 * fine);
    const r = rnd();
    let c = 58 + inside * m * (14 + 88 * r * r);
    c += inside * bright[k] / 255 * (10 + 95 * rnd());
    img.data[k] = img.data[k + 1] = img.data[k + 2] = c;
    img.data[k + 3] = 255;
  }
}
ctx.putImageData(img, 0, 0);

// Steep artefact near the delta
ctx.fillStyle = '#3a3a3a';
trace(ctx, [[440,376],[460,390],[455,408],[446,402],[435,384]]); ctx.fill();
ctx.strokeStyle = 'rgba(150,150,150,.6)'; ctx.lineWidth = 1; ctx.setLineDash([5, 2, 2, 3]);
trace(ctx, rough([[429,371],[438,388],[444,404],[455,413],[461,398],[463,390],[450,380],[441,374]], 0.5)); ctx.stroke();
ctx.strokeStyle = '#e6e6e6'; ctx.lineWidth = 1.7; ctx.setLineDash([3, 2, 5, 1]);
trace(ctx, [[444,399],[447,407],[453,406],[456,414]]); ctx.stroke();
trace(ctx, [[451,389],[456,391],[463,390]]); ctx.stroke();
trace(ctx, [[461,399],[460,406]]); ctx.stroke();
```
